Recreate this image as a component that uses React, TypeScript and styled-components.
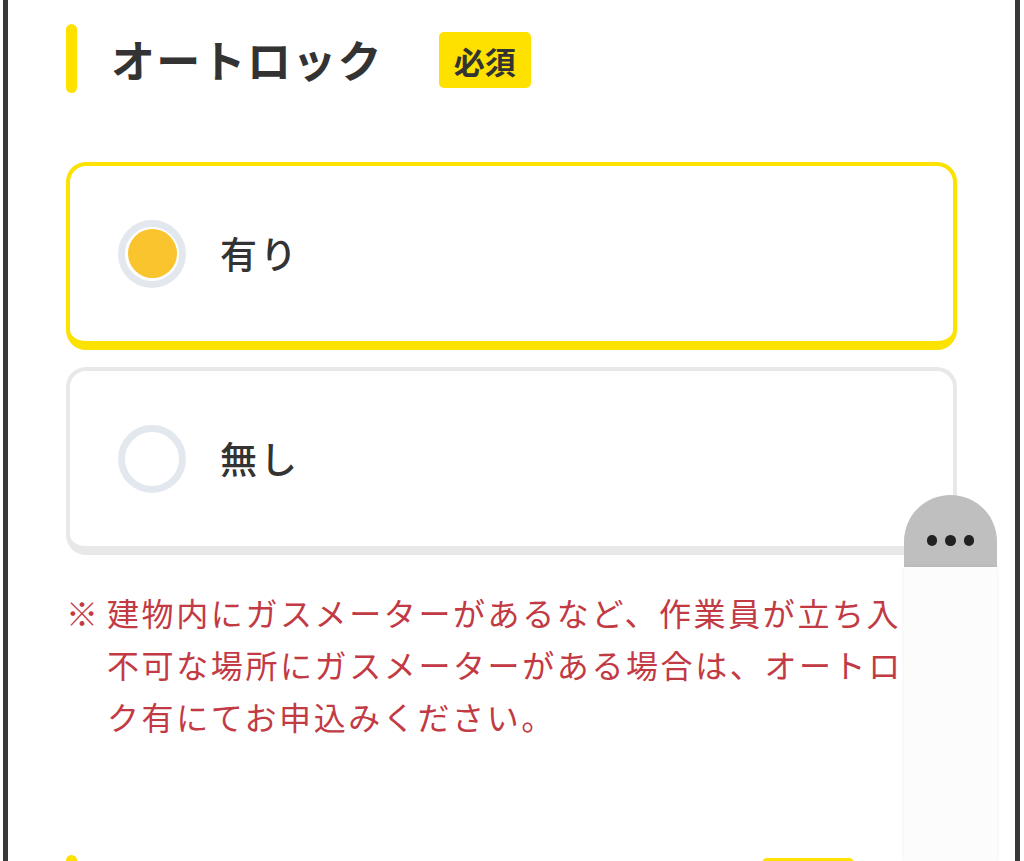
import React from "react";
import styled, { createGlobalStyle } from "styled-components";

const GlobalStyle = createGlobalStyle`
  html, body {
    margin: 0;
    padding: 0;
    background: #ffffff;
    overflow: hidden;
  }
  body {
    font-family: "Noto Sans CJK JP", "Noto Sans", sans-serif;
    color: #333333;
  }
  * { box-sizing: border-box; }
`;

const Page = styled.div`
  height: 861px;
  padding: 0 4px 0 3px;
  background: #ffffff;
  overflow: hidden;
`;

const Frame = styled.div`
  position: relative;
  height: 100%;
  border-left: 5px solid #3a3735;
  border-right: 5px solid #3a3735;
  padding: 24px 58px 0 58px;
  overflow: hidden;
`;

const Section = styled.section<{ $gap?: number }>`
  margin-top: ${(p) => p.$gap ?? 0}px;
`;

const Header = styled.div`
  display: flex;
  align-items: center;
  height: 69px;
`;

const Bar = styled.span`
  display: block;
  width: 11px;
  height: 69px;
  border-radius: 6px;
  background: #ffe100;
  flex: none;
`;

const Title = styled.h2`
  margin: 0 56px 0 34px;
  font-size: 44px;
  font-weight: 700;
  letter-spacing: 1.3px;
  line-height: 1;
  color: #333333;
`;

const TitleSpacer = styled.div<{ $w: number }>`
  width: ${(p) => p.$w}px;
  margin: 0 56px 0 34px;
  flex: none;
`;

const Badge = styled.span<{ $top?: number }>`
  display: inline-flex;
  align-items: center;
  justify-content: center;
  height: 56px;
  padding: 0 15px;
  border-radius: 5px;
  background: #ffe100;
  font-size: 31px;
  font-weight: 700;
  color: #333333;
  line-height: 1;
  align-self: flex-start;
  margin-top: ${(p) => p.$top ?? 8}px;
`;

const Options = styled.div`
  display: flex;
  flex-direction: column;
  gap: 17px;
  margin-top: 69px;
`;

const Option = styled.label<{ $selected?: boolean }>`
  display: flex;
  align-items: center;
  height: 188px;
  padding-left: 48px;
  border: 4px solid ${(p) => (p.$selected ? "#fbe200" : "#e8e8e8")};
  border-bottom-width: 9px;
  border-radius: 20px;
  background: #ffffff;
  cursor: pointer;
`;

const Radio = styled.span<{ $checked?: boolean }>`
  display: flex;
  align-items: center;
  justify-content: center;
  width: 68px;
  height: 68px;
  border-radius: 50%;
  border: 7px solid #e3e8ef;
  background: #ffffff;
  flex: none;

  &::after {
    content: "";
    display: ${(p) => (p.$checked ? "block" : "none")};
    width: 49px;
    height: 49px;
    border-radius: 50%;
    background: #fac42f;
  }
`;

const OptionLabel = styled.span`
  margin-left: 34px;
  font-size: 37px;
  font-weight: 500;
  letter-spacing: 3px;
  color: #333333;
  line-height: 1;
`;

const Note = styled.div`
  display: flex;
  margin-top: 31px;
  color: #c23a44;
  font-size: 32px;
  line-height: 52px;
  letter-spacing: 2.6px;
`;

const Mark = styled.span`
  width: 41px;
  flex: none;
`;

const NoteText = styled.p`
  margin: 0;
  width: 840px;
`;

const Widget = styled.div`
  position: absolute;
  z-index: 2;
  top: 495px;
  right: 18px;
  bottom: 0;
  width: 93px;
  display: flex;
  flex-direction: column;
`;

const WidgetHead = styled.div`
  height: 72px;
  flex: none;
  background: #bfbfbf;
  border-radius: 47px 47px 0 0;
  display: flex;
  justify-content: center;
  align-items: flex-start;
  gap: 8px;
  padding-top: 40px;
`;

const Dot = styled.span`
  width: 10.5px;
  height: 10.5px;
  border-radius: 50%;
  background: #222222;
`;

const WidgetBody = styled.div`
  flex: 1;
  background: #fcfcfc;
  box-shadow: 0 0 4px rgba(0, 0, 0, 0.07);
`;

export default function App() {
  return (
    <>
      <GlobalStyle />
      <Page>
        <Frame>
          <Section>
            <Header>
              <Bar />
              <Title>オートロック</Title>
              <Badge>必須</Badge>
            </Header>
            <Options>
              <Option $selected>
                <Radio $checked />
                <OptionLabel>有り</OptionLabel>
              </Option>
              <Option>
                <Radio />
                <OptionLabel>無し</OptionLabel>
              </Option>
            </Options>
            <Note>
              <Mark>※</Mark>
              <NoteText>
                建物内にガスメーターがあるなど、作業員が立ち入り不可な場所にガスメーターがある場合は、オートロック有にてお申込みください。
              </NoteText>
            </Note>
          </Section>
          <Section $gap={113}>
            <Header>
              <Bar />
              <TitleSpacer $w={595} />
              <Badge $top={3}>必須</Badge>
            </Header>
          </Section>
          <Widget>
            <WidgetHead>
              <Dot />
              <Dot />
              <Dot />
            </WidgetHead>
            <WidgetBody />
          </Widget>
        </Frame>
      </Page>
    </>
  );
}
